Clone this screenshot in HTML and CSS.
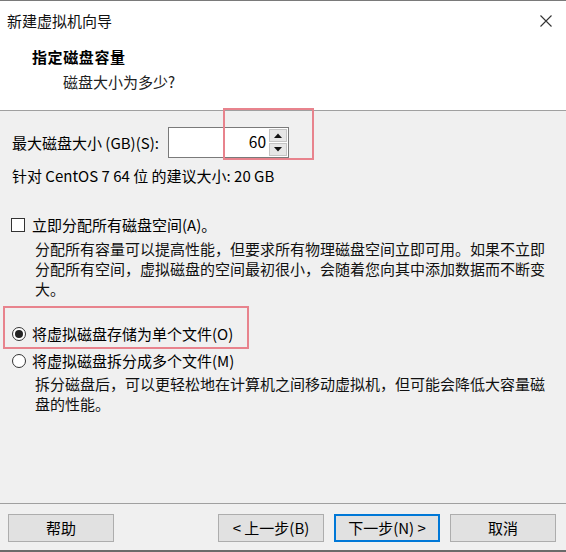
FILE: index.html
```html
<!DOCTYPE html>
<html lang="zh-CN">
<head>
<meta charset="utf-8">
<title>新建虚拟机向导</title>
<link rel="stylesheet" href="styles.css">
</head>
<body>
<div class="window">
  <div class="header">
    <div class="titlebar">
      <span class="title">新建虚拟机向导</span>
      <svg class="close" width="12" height="12" viewBox="0 0 12 12"><path d="M0.5 0.5 L11.5 11.5 M11.5 0.5 L0.5 11.5" stroke="#333" stroke-width="1.1" fill="none"/></svg>
    </div>
    <div class="heading">指定磁盘容量</div>
    <div class="subtitle">磁盘大小为多少?</div>
  </div>

  <div class="content">
    <div class="size-row">
      <label class="size-label">最大磁盘大小 (GB)(S):</label>
      <div class="spin-box">
        <span class="spin-value">60</span>
        <div class="spin-btns">
          <span class="spin-btn"><svg width="8" height="5" viewBox="0 0 8 5"><path d="M0 5 L4 0.5 L8 5 Z" fill="#111"/></svg></span>
          <span class="spin-btn"><svg width="8" height="5" viewBox="0 0 8 5"><path d="M0 0 L4 4.5 L8 0 Z" fill="#111"/></svg></span>
        </div>
      </div>
      <div class="mark mark-size"></div>
    </div>
    <div class="hint">针对 CentOS 7 64 位 的建议大小: 20 GB</div>

    <div class="check-row">
      <span class="checkbox"></span>
      <span>立即分配所有磁盘空间(A)。</span>
    </div>
    <p class="desc">分配所有容量可以提高性能，但要求所有物理磁盘空间立即可用。如果不立即分配所有空间，虚拟磁盘的空间最初很小，会随着您向其中添加数据而不断变大。</p>

    <div class="radio-group">
      <div class="radio-row first">
        <span class="radio checked"></span>
        <span>将虚拟磁盘存储为单个文件(O)</span>
      </div>
      <div class="radio-row second">
        <span class="radio"></span>
        <span>将虚拟磁盘拆分成多个文件(M)</span>
      </div>
      <div class="mark mark-radio"></div>
    </div>
    <p class="desc desc2">拆分磁盘后，可以更轻松地在计算机之间移动虚拟机，但可能会降低大容量磁盘的性能。</p>
  </div>

  <div class="footer">
    <button class="btn">帮助</button>
    <div class="nav">
      <button class="btn">&lt; 上一步(B)</button>
      <button class="btn primary">下一步(N) &gt;</button>
      <button class="btn">取消</button>
    </div>
  </div>
</div>
</body>
</html>
```

FILE: styles.css
```css
* { box-sizing: border-box; }

html, body {
  margin: 0;
  padding: 0;
}

body {
  width: 566px;
  height: 552px;
  background: #f0f0f0;
  color: #000;
  font-family: "Noto Sans CJK SC", "Noto Sans", sans-serif;
  font-size: 15px;
  line-height: 20px;
  overflow: hidden;
}

.window {
  height: 552px;
  display: flex;
  flex-direction: column;
  border-top: 1px solid #7a7a7a;
}

.header {
  height: 110px;
  background: #fff;
  border-bottom: 1px solid #a0a0a0;
}

.titlebar {
  height: 40px;
  display: flex;
  align-items: center;
  justify-content: space-between;
  padding: 0 14px 0 7px;
  color: #111;
}

.heading {
  margin-top: 6px;
  padding-left: 32px;
  font-weight: bold;
  letter-spacing: 0.6px;
}

.subtitle {
  margin-top: 5px;
  padding-left: 63px;
  color: #222;
}

.content {
  flex: 1;
  display: flex;
  flex-direction: column;
}

.size-row {
  position: relative;
  margin-top: 16px;
  height: 31px;
  display: flex;
  align-items: center;
}

.size-label {
  width: 168px;
  padding-left: 12px;
}

.spin-box {
  width: 121px;
  height: 31px;
  display: flex;
  background: #fff;
  border: 1px solid #7a7a7a;
}

.spin-value {
  flex: 1;
  text-align: right;
  padding-right: 3px;
  line-height: 27px;
  font-size: 15.5px;
}

.spin-btns {
  width: 19px;
  display: flex;
  flex-direction: column;
  padding: 1px 1px 1px 0;
  gap: 1px;
}

.spin-btn {
  flex: 1;
  display: flex;
  align-items: center;
  justify-content: center;
  background: #e6e6e6;
  border: 1px solid #c4c4c4;
}

.mark {
  position: absolute;
  border: 2px solid #e8838d;
  pointer-events: none;
}

.mark-size {
  left: 223px;
  top: -19px;
  width: 91px;
  height: 52px;
}

.hint {
  margin-top: 8px;
  padding-left: 12px;
}

.check-row {
  margin-top: 29px;
  display: flex;
  align-items: center;
  gap: 7px;
  padding-left: 11px;
}

.checkbox {
  width: 14px;
  height: 14px;
  background: #fff;
  border: 1px solid #333;
}

.desc {
  margin: 4px 0 0 0;
  padding: 0 16px 0 35px;
  color: #111;
}

.radio-group {
  position: relative;
  margin-top: 25px;
}

.radio-row {
  display: flex;
  align-items: center;
  gap: 6px;
  padding-left: 12px;
  height: 20px;
}

.radio-row.second {
  margin-top: 7px;
}

.radio {
  width: 14px;
  height: 14px;
  border-radius: 50%;
  background: #fff;
  border: 1px solid #333;
  display: flex;
  align-items: center;
  justify-content: center;
}

.radio.checked::after {
  content: "";
  width: 8px;
  height: 8px;
  border-radius: 50%;
  background: #222;
}

.mark-radio {
  left: 3px;
  top: -18px;
  width: 246px;
  height: 43px;
}

.desc2 {
  margin-top: 3px;
}

.footer {
  height: 49px;
  border-top: 1px solid #a0a0a0;
  border-bottom: 2px solid #6a6a6a;
  display: flex;
  align-items: flex-start;
  justify-content: space-between;
  padding: 10px 10px 0 8px;
}

.nav {
  display: flex;
  gap: 10px;
}

.btn {
  width: 106px;
  height: 28px;
  background: #e1e1e1;
  border: 1px solid #adadad;
  font-family: "Noto Sans CJK SC", "Noto Sans", sans-serif;
  font-size: 15px;
  color: #000;
  padding: 0;
  line-height: 20px;
}

.btn.primary {
  border: 2px solid #0078d7;
}
```
